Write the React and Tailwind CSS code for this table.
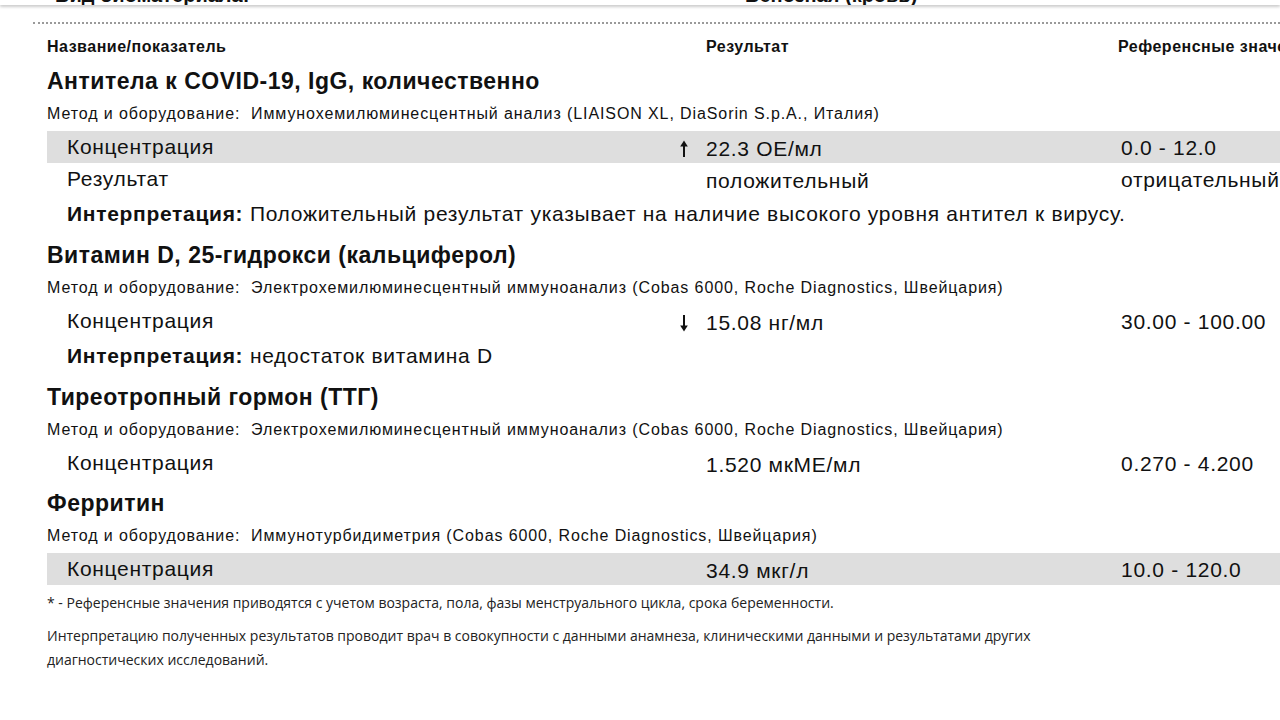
import React from "react";

const sans = { fontFamily: '"Liberation Sans", Arial, sans-serif' };

const tests = [
  {
    title: "Антитела к COVID-19, IgG, количественно",
    method: "Иммунохемилюминесцентный анализ (LIAISON XL, DiaSorin S.p.A., Италия)",
    rows: [
      { name: "Концентрация", arrow: "up", value: "22.3 ОЕ/мл", ref: "0.0 - 12.0", shaded: true },
      { name: "Результат", value: "положительный", ref: "отрицательный" },
    ],
    interp: "Положительный результат указывает на наличие высокого уровня антител к вирусу.",
  },
  {
    title: "Витамин D, 25-гидрокси (кальциферол)",
    method: "Электрохемилюминесцентный иммуноанализ (Cobas 6000, Roche Diagnostics, Швейцария)",
    rows: [{ name: "Концентрация", arrow: "down", value: "15.08 нг/мл", ref: "30.00 - 100.00" }],
    interp: "недостаток витамина D",
  },
  {
    title: "Тиреотропный гормон (ТТГ)",
    method: "Электрохемилюминесцентный иммуноанализ (Cobas 6000, Roche Diagnostics, Швейцария)",
    rows: [{ name: "Концентрация", value: "1.520 мкМЕ/мл", ref: "0.270 - 4.200" }],
  },
  {
    title: "Ферритин",
    method: "Иммунотурбидиметрия (Cobas 6000, Roche Diagnostics, Швейцария)",
    rows: [{ name: "Концентрация", value: "34.9 мкг/л", ref: "10.0 - 120.0", shaded: true }],
  },
];

const cols = "grid grid-cols-[628px_31px_412px_400px]";

function Arrow({ dir }) {
  return (
    <svg width="10" height="18" viewBox="0 0 10 18" className={dir === "down" ? "rotate-180" : ""}>
      <path d="M5 4 V17" stroke="#111" strokeWidth="2" />
      <path d="M1.2 6.5 L5 0.5 L8.8 6.5 Z" fill="#111" />
    </svg>
  );
}

function Row({ row, first }) {
  return (
    <div
      className={`${cols} h-[32px] items-center text-[21px] tracking-[0.7px] ${first ? "mt-[1px]" : ""} ${
        row.shaded ? "bg-[#dedede]" : ""
      }`}
    >
      <div className="pl-[20px] pb-[3px]">{row.name}</div>
      <div className="flex pl-[4px] pt-[2px]">{row.arrow && <Arrow dir={row.arrow} />}</div>
      <div className="pt-[1px]">{row.value}</div>
      <div className="pl-[3px] pb-[1px]">{row.ref}</div>
    </div>
  );
}

function Test({ t, first }) {
  return (
    <div className={first ? "mt-[5px]" : "mt-[7px]"}>
      <div className="h-[34px] flex items-center text-[23px] tracking-[0.5px] font-bold">{t.title}</div>
      <div className="h-[32px] flex items-center text-[16px] tracking-[0.9px]">
        <span className="whitespace-pre">{"Метод и оборудование:  " + t.method}</span>
      </div>
      {t.rows.map((r, i) => <Row row={r} first={i === 0} key={i} />)}
      {t.interp && (
        <div className="mt-[2px] h-[34px] flex items-center pl-[20px] text-[21px] tracking-[0.7px]">
          <span className="font-bold">Интерпретация:</span>&nbsp;{t.interp}
        </div>
      )}
    </div>
  );
}

export default function App() {
  return (
    <div className="w-[1280px] h-[720px] overflow-hidden bg-white text-[#111]" style={sans}>
      {/* tail of the previous block, cut by the page edge */}
      <div className="relative h-[5px] overflow-hidden shadow-[0_2px_3px_rgba(0,0,0,0.2)]">
        <div className="absolute bottom-[0px] left-[55px] text-[20px] font-bold leading-none">Вид биоматериала:</div>
        <div className="absolute bottom-[0px] left-[745px] text-[20px] font-bold leading-none">Венозная (кровь)</div>
      </div>
      <div className="ml-[33px] mt-[17px] border-t-2 border-dotted border-[#9a9a9a]"></div>

      <div className="pl-[47px] w-[1600px]">
        <div className={`${cols} mt-[11px] h-[24px] items-center text-[16px] tracking-[0.5px] font-bold`}>
          <div>Название/показатель</div>
          <div></div>
          <div>Результат</div>
          <div>Референсные значения*</div>
        </div>

        {tests.map((t, i) => <Test t={t} first={i === 0} key={i} />)}

        <div className="text-[14px] text-[#222]" style={{ fontFamily: '"Open Sans", "Liberation Sans", sans-serif' }}>
          <div className="mt-[8px] leading-[20px]">
            * - Референсные значения приводятся с учетом возраста, пола, фазы менструального цикла, срока беременности.
          </div>
          <div className="mt-[11px] leading-[24px]">
            Интерпретацию полученных результатов проводит врач в совокупности с данными анамнеза, клиническими данными и результатами других
            <br />
            диагностических исследований.
          </div>
        </div>
      </div>
    </div>
  );
}
